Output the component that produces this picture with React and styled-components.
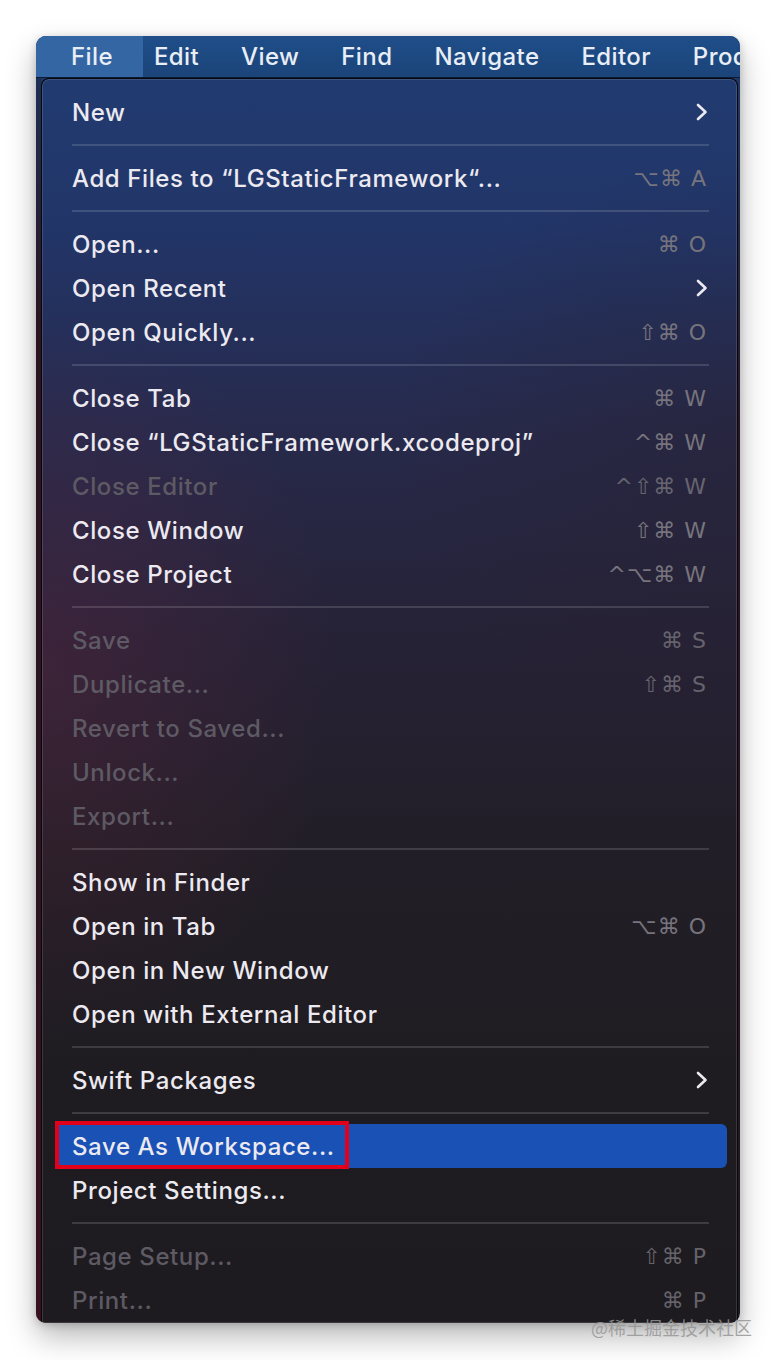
import React from "react";
import styled, { createGlobalStyle } from "styled-components";

const GlobalStyle = createGlobalStyle`
  html, body {
    margin: 0;
    padding: 0;
    background: #ffffff;
  }
  body {
    font-family: "Inter", "Roboto", "Liberation Sans", sans-serif;
    -webkit-font-smoothing: antialiased;
  }
`;

const Page = styled.div`
  position: relative;
  width: 776px;
  height: 1360px;
  box-sizing: border-box;
  padding: 36px 36px 0;
  background: #ffffff;
`;

const Window = styled.div`
  width: 704px;
  height: 1287px;
  border-radius: 10px;
  overflow: hidden;
  display: flex;
  flex-direction: column;
  background: linear-gradient(180deg, #1d3b6c 0%, #2a1524 30%, #2a1422 70%, #1d1a1e 100%);
  box-shadow: 0 14px 30px rgba(0, 0, 0, 0.28), 0 2px 8px rgba(0, 0, 0, 0.18);
`;

const MenuBar = styled.div`
  height: 41px;
  flex: none;
  display: flex;
  align-items: stretch;
  background: linear-gradient(180deg, #1f4e89 0%, #1b4479 100%);
  border-bottom: 1px solid #0d1a33;
  white-space: nowrap;
  overflow: hidden;
`;

const BarItem = styled.div`
  display: flex;
  align-items: center;
  flex: none;
  padding: ${(p) => (p.$active ? "0 30px 0 35px" : "0 21px")};
  margin-right: ${(p) => (p.$active ? "-10px" : "0")};
  font-size: 24px;
  font-weight: 500;
  letter-spacing: 0.4px;
  color: #e9eef6;
  background: ${(p) => (p.$active ? "#3466a3" : "transparent")};
  border-top-left-radius: ${(p) => (p.$active ? "10px" : "0")};
`;

const Body = styled.div`
  flex: 1;
  display: flex;
  min-height: 0;
`;

const BehindStrip = styled.div`
  width: 5px;
  flex: none;
  background: linear-gradient(180deg, #1c2f55 0%, #2b1320 20%, #2b1421 60%, #3a1020 100%);
`;

const Panel = styled.div`
  flex: 1;
  margin-right: 2px;
  box-sizing: border-box;
  padding-top: 11px;
  border: 1px solid #07070c;
  border-bottom: none;
  border-radius: 8px 8px 0 0;
  box-shadow: inset 0 0 0 1px rgba(255, 255, 255, 0.13);
  background:
    radial-gradient(ellipse 420px 520px at 0% 48%, rgba(120, 40, 70, 0.28), rgba(120, 40, 70, 0) 70%),
    radial-gradient(ellipse 500px 420px at 100% 30%, rgba(40, 30, 40, 0.35), rgba(40, 30, 40, 0) 70%),
    linear-gradient(180deg, #213b70 0%, #223568 12%, #272a4c 28%, #262236 45%, #221e27 62%, #1f1c21 80%, #1d1b1f 100%);
  overflow: hidden;
`;

const Row = styled.div`
  position: relative;
  height: 44px;
  margin: 0 10px 0 13px;
  padding: 0 20px 0 17px;
  display: flex;
  align-items: center;
  justify-content: space-between;
  border-radius: 6px;
  background: ${(p) => (p.$selected ? "#1a51b5" : "transparent")};
  white-space: nowrap;
`;

const Label = styled.span`
  font-size: 24px;
  font-weight: 500;
  letter-spacing: 0.6px;
  color: ${(p) => (p.$disabled ? "#5e5a64" : "#eceaf0")};
`;

const Shortcut = styled.span`
  font-family: "DejaVu Sans", "Liberation Sans", sans-serif;
  font-size: 22px;
  color: #77747d;
  letter-spacing: 1px;
  opacity: ${(p) => (p.$dim ? 0.8 : 1)};
`;

const Chevron = styled.svg`
  width: 14px;
  height: 22px;
  margin-right: -2px;
`;

const Separator = styled.div`
  height: 22px;
  display: flex;
  align-items: center;
  padding: 0 28px 0 30px;
  &::after {
    content: "";
    flex: 1;
    height: 2px;
    background: rgba(255, 255, 255, 0.14);
  }
`;

const RedFrame = styled.div`
  position: absolute;
  left: 0;
  top: -3px;
  width: 294px;
  height: 48px;
  box-sizing: border-box;
  border: 4px solid #e3001b;
  pointer-events: none;
`;

const Watermark = styled.div`
  position: absolute;
  right: 24px;
  top: 1314px;
  font-family: "Noto Sans CJK SC", "Liberation Sans", sans-serif;
  font-size: 18px;
  color: rgba(150, 150, 150, 0.85);
`;

const bar = ["File", "Edit", "View", "Find", "Navigate", "Editor", "Product"];

const groups = [
  [{ label: "New", sub: true }],
  [{ label: "Add Files to “LGStaticFramework“...", keys: "⌥⌘ A" }],
  [
    { label: "Open...", keys: "⌘ O" },
    { label: "Open Recent", sub: true },
    { label: "Open Quickly...", keys: "⇧⌘ O" },
  ],
  [
    { label: "Close Tab", keys: "⌘ W" },
    { label: "Close “LGStaticFramework.xcodeproj”", keys: "^⌘ W" },
    { label: "Close Editor", keys: "^⇧⌘ W", disabled: true },
    { label: "Close Window", keys: "⇧⌘ W" },
    { label: "Close Project", keys: "^⌥⌘ W" },
  ],
  [
    { label: "Save", keys: "⌘ S", disabled: true },
    { label: "Duplicate...", keys: "⇧⌘ S", disabled: true },
    { label: "Revert to Saved...", disabled: true },
    { label: "Unlock...", disabled: true },
    { label: "Export...", disabled: true },
  ],
  [
    { label: "Show in Finder" },
    { label: "Open in Tab", keys: "⌥⌘ O" },
    { label: "Open in New Window" },
    { label: "Open with External Editor" },
  ],
  [{ label: "Swift Packages", sub: true }],
  [
    { label: "Save As Workspace...", selected: true },
    { label: "Project Settings..." },
  ],
  [
    { label: "Page Setup...", keys: "⇧⌘ P", disabled: true },
    { label: "Print...", keys: "⌘ P", disabled: true },
  ],
];

function MenuRow({ item }) {
  return (
    <Row $selected={item.selected}>
      <Label $disabled={item.disabled}>{item.label}</Label>
      {item.keys && <Shortcut $dim={item.disabled}>{item.keys}</Shortcut>}
      {item.sub && (
        <Chevron viewBox="0 0 14 22">
          <path
            d="M3 4 L10.5 11 L3 18"
            fill="none"
            stroke="#eceaf0"
            strokeWidth="2.6"
            strokeLinecap="round"
            strokeLinejoin="round"
          />
        </Chevron>
      )}
      {item.selected && <RedFrame />}
    </Row>
  );
}

export default function App() {
  return (
    <>
      <GlobalStyle />
      <Page>
        <Window>
          <MenuBar>
            {bar.map((name, i) => (
              <BarItem key={name} $active={i === 0}>
                {name}
              </BarItem>
            ))}
          </MenuBar>
          <Body>
            <BehindStrip />
            <Panel>
              {groups.map((group, gi) => (
                <React.Fragment key={gi}>
                  {gi > 0 && <Separator />}
                  {group.map((item) => (
                    <MenuRow key={item.label} item={item} />
                  ))}
                </React.Fragment>
              ))}
            </Panel>
          </Body>
        </Window>
        <Watermark>@稀土掘金技术社区</Watermark>
      </Page>
    </>
  );
}
